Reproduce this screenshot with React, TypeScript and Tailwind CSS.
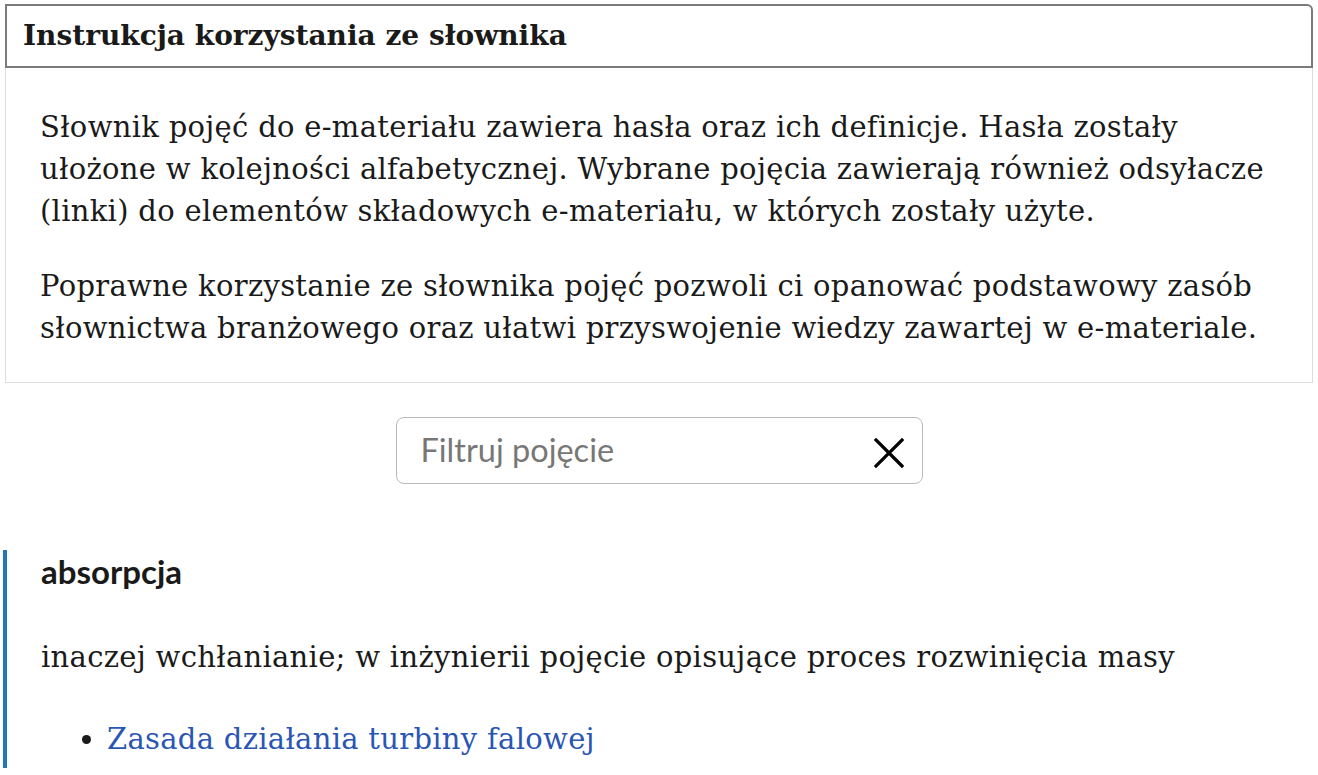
const serif = "font-['DejaVu_Serif',serif]";
const sans = "font-['Lato','Liberation_Sans',sans-serif]";

const Instructions = () => {
    return (
        <section className="mx-[5px] pt-[4px]">
            <div className="h-[64px] border-2 border-[#7b7b7b] rounded-tr-[6px] flex items-center px-[16px]">
                <h1 className={`${serif} text-[28px] font-bold text-[#1a1a1a]`}>Instrukcja korzystania ze słownika</h1>
            </div>
            <div className={`${serif} border border-t-0 border-[#dedede] pt-[38px] pb-[33px] pl-[34px] pr-[10px] text-[29px] tracking-[0.3px] leading-[42px] text-[#1a1a1a]`}>
                <p>
                    Słownik pojęć do e-materiału zawiera hasła oraz ich definicje. Hasła zostały<br />
                    ułożone w kolejności alfabetycznej. Wybrane pojęcia zawierają również odsyłacze<br />
                    (linki) do elementów składowych e-materiału, w których zostały użyte.
                </p>
                <p className="mt-[33px]">
                    Poprawne korzystanie ze słownika pojęć pozwoli ci opanować podstawowy zasób<br />
                    słownictwa branżowego oraz ułatwi przyswojenie wiedzy zawartej w e-materiale.
                </p>
            </div>
        </section>
    );
};

const Filter = () => {
    return (
        <div className="flex justify-center mt-[34px]">
            <div className="w-[527px] h-[67px] border border-[#b9b9b9] rounded-[8px] flex items-center pl-[24px] pr-[18px]">
                <input
                    className={`${sans} flex-1 min-w-0 text-[32.5px] text-[#1a1a1a] placeholder:text-[#777] outline-none bg-transparent`}
                    placeholder="Filtruj pojęcie"
                />
                <svg width="30" height="30" viewBox="0 0 30 30" className="shrink-0 mt-[4px]" aria-label="Wyczyść">
                    <path d="M2 2 L28 28 M28 2 L2 28" stroke="#000" strokeWidth="3.2" strokeLinecap="square" fill="none" />
                </svg>
            </div>
        </div>
    );
};

const Entry = () => {
    return (
        <article className="mt-[66px] ml-[3px] border-l-4 border-[#1f77b8] pl-[34px] pt-[4px] pb-[8px]">
            <h2 className={`${sans} text-[33px] font-bold leading-[34px] text-[#1a1a1a]`}>absorpcja</h2>
            <p className={`${serif} mt-[48px] text-[29px] tracking-[0.3px] leading-[42px] text-[#1a1a1a]`}>
                inaczej wchłanianie; w inżynierii pojęcie opisujące proces rozwinięcia masy
            </p>
            <ul className={`${serif} mt-[40px] list-disc pl-[66px] text-[29px] tracking-[0.3px] leading-[42px]`}>
                <li className="text-[#1a1a1a]">
                    <a href="#" className="text-[#2a56b3]">Zasada działania turbiny falowej</a>
                </li>
            </ul>
        </article>
    );
};

export default function App() {
    return (
        <main className="bg-white min-h-screen">
            <Instructions />
            <Filter />
            <Entry />
        </main>
    );
}
